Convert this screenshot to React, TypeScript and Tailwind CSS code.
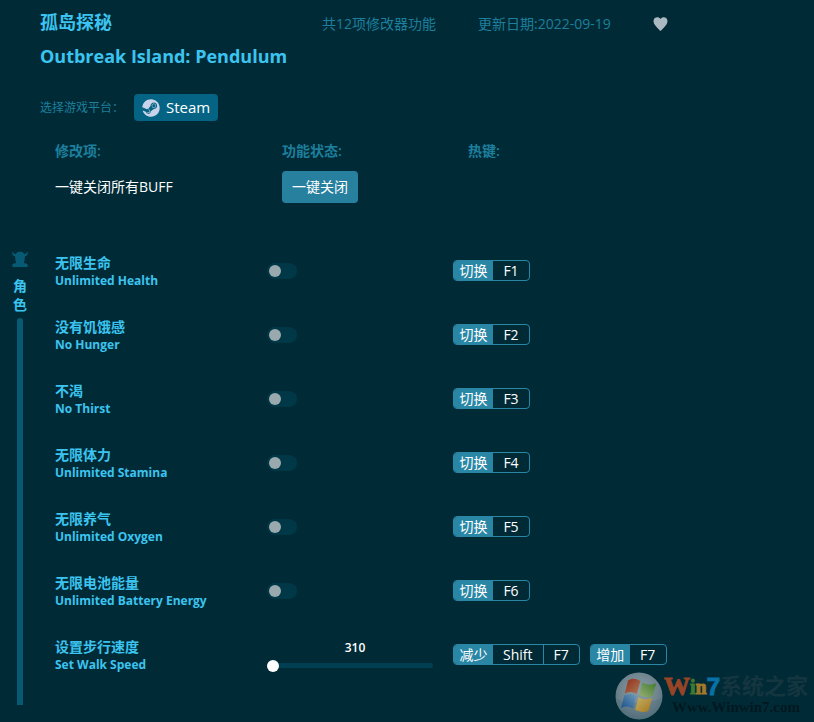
import { useState } from "react";
import { FaSteam } from "react-icons/fa";

type Hotkey = { action: string; keys: string[] };
type Cheat = { zh: string; en: string; hotkeys: Hotkey[]; slider?: boolean };

const cheats: Cheat[] = [
  { zh: "无限生命", en: "Unlimited Health", hotkeys: [{ action: "切换", keys: ["F1"] }] },
  { zh: "没有饥饿感", en: "No Hunger", hotkeys: [{ action: "切换", keys: ["F2"] }] },
  { zh: "不渴", en: "No Thirst", hotkeys: [{ action: "切换", keys: ["F3"] }] },
  { zh: "无限体力", en: "Unlimited Stamina", hotkeys: [{ action: "切换", keys: ["F4"] }] },
  { zh: "无限养气", en: "Unlimited Oxygen", hotkeys: [{ action: "切换", keys: ["F5"] }] },
  { zh: "无限电池能量", en: "Unlimited Battery Energy", hotkeys: [{ action: "切换", keys: ["F6"] }] },
  {
    zh: "设置步行速度",
    en: "Set Walk Speed",
    slider: true,
    hotkeys: [
      { action: "减少", keys: ["Shift", "F7"] },
      { action: "增加", keys: ["F7"] },
    ],
  },
];

function HotkeyGroup({ action, keys }: Hotkey) {
  return (
    <div className="flex h-[21px] overflow-hidden rounded-sm border border-[#2a86a5] text-sm leading-[19px] text-white">
      <span className="w-[39px] bg-[#2a86a5] text-center">{action}</span>
      {keys.map((key, i) => (
        <kbd
          key={key}
          className={`min-w-9 px-[10px] text-center font-[inherit] ${i > 0 ? "border-l border-[#2a86a5]" : ""}`}
        >
          {key}
        </kbd>
      ))}
    </div>
  );
}

function Toggle({ id }: { id: string }) {
  return (
    <input
      id={id}
      type="checkbox"
      role="switch"
      className="block h-4 w-[30px] cursor-pointer appearance-none rounded-full bg-[#003847] p-[2px] before:block before:size-3 before:rounded-full before:bg-[#9aa9ae] before:content-[''] checked:bg-[#2a86a5] checked:before:ml-[14px] checked:before:bg-white"
    />
  );
}

function SpeedSlider({ id }: { id: string }) {
  const [speed, setSpeed] = useState(310);
  return (
    <div className="flex w-[166px] flex-col pt-[3px]">
      <output htmlFor={id} className="pl-[10px] text-center text-xs leading-4 font-semibold text-white">
        {speed}
      </output>
      <input
        id={id}
        type="range"
        min={310}
        max={3000}
        value={speed}
        onChange={(e) => setSpeed(Number(e.target.value))}
        className="mt-px h-4 w-full cursor-pointer appearance-none bg-transparent [&::-webkit-slider-runnable-track]:h-[5px] [&::-webkit-slider-runnable-track]:rounded-full [&::-webkit-slider-runnable-track]:bg-[#003f51] [&::-webkit-slider-thumb]:-mt-[3px] [&::-webkit-slider-thumb]:size-3 [&::-webkit-slider-thumb]:appearance-none [&::-webkit-slider-thumb]:rounded-full [&::-webkit-slider-thumb]:bg-white"
      />
    </div>
  );
}

function CheatRow({ cheat, id }: { cheat: Cheat; id: string }) {
  return (
    <li className="grid h-16 grid-cols-[212px_186px_1fr] items-center">
      <label htmlFor={id} className="flex flex-col pt-0.5 font-bold text-[#3cc4f0]">
        <span className="text-sm leading-[18px]">{cheat.zh}</span>
        <span className="text-xs leading-[18px]">{cheat.en}</span>
      </label>
      {cheat.slider ? <SpeedSlider id={id} /> : <Toggle id={id} />}
      <div className="flex gap-[10px] pb-px">
        {cheat.hotkeys.map((h) => (
          <HotkeyGroup key={h.action} {...h} />
        ))}
      </div>
    </li>
  );
}

function CharacterIcon() {
  return (
    <svg viewBox="0 0 16 16" className="size-4" fill="#075a73" aria-hidden="true">
      <path d="M.3 1 1.300 1C1.300 2.300 2 3 3.800 2.900 4.600 1.300 6 .7 8 .7s3.400.6 4.200 2.200C14 3 14.700 2.300 14.700 1h1c.3 2.400-.6 3.900-2.700 4.200l-.5 4.300L11.800 12l3 .8c.5.200.8.500.8 1V16H.4v-2.200c0-.5.300-.8.8-1l3-.8-.7-2.500L3 5.200C.9 4.900 0 3.400.3 1z" />
    </svg>
  );
}

function Watermark() {
  return (
    <div className="pointer-events-none absolute right-1.5 bottom-0.5 flex items-center gap-px">
      <svg viewBox="0 0 48 48" className="size-12" aria-hidden="true">
        <defs>
          <radialGradient id="orb" cx="50%" cy="40%" r="60%">
            <stop offset="0" stopColor="#879fa9" />
            <stop offset=".65" stopColor="#71858f" />
            <stop offset="1" stopColor="#54717d" />
          </radialGradient>
          <linearGradient id="red" x1="0" y1="0" x2="1" y2="1">
            <stop offset="0" stopColor="#8e301c" />
            <stop offset="1" stopColor="#b07552" />
          </linearGradient>
          <linearGradient id="green" x1="1" y1="0" x2="0" y2="1">
            <stop offset="0" stopColor="#3c7a2c" />
            <stop offset="1" stopColor="#9aae77" />
          </linearGradient>
          <linearGradient id="blue" x1="0" y1="1" x2="1" y2="0">
            <stop offset="0" stopColor="#174f90" />
            <stop offset="1" stopColor="#6f9cb5" />
          </linearGradient>
          <linearGradient id="yellow" x1="1" y1="1" x2="0" y2="0">
            <stop offset="0" stopColor="#a8781c" />
            <stop offset="1" stopColor="#c1b069" />
          </linearGradient>
        </defs>
        <circle cx="24" cy="24" r="23.500" fill="url(#orb)" />
        <path d="M1 27c12 5 33 5 46-1-1 12-11 21-23 21S2 39 1 27z" fill="#4b6a77" opacity=".3" />
        <path d="M13 8.500c4-2.500 8-2 12.300.5l-3.500 13c-4-2.500-8-2.700-12-.6z" fill="url(#red)" />
        <path d="M27.500 10.500c4.500 2.500 9 3 13.800.8L37.600 24c-4.500 2-9 1.300-13.500-1z" fill="url(#green)" />
        <path d="M9.300 23.500c4-2.200 8-2 12 .6L18 36.500c-4-2.500-8-2.700-12-.6z" fill="url(#blue)" />
        <path d="M23.500 25c4 2.500 8.500 3 13.500.8L33.500 38.800c-4.500 2-9 1.300-13.300-1z" fill="url(#yellow)" />
      </svg>
      <div className="flex flex-col items-center font-['Liberation_Serif','Noto_Sans_CJK_SC',serif] font-bold">
        <div className="flex h-[22px] items-center leading-[22px]">
          <span className="text-[26px] text-[#9a4426] [-webkit-text-stroke:1px_#9a4426]">W</span>
          <span className="text-xl text-[#3c7a32] [-webkit-text-stroke:1px_#3c7a32]">i</span>
          <span className="text-xl text-[#a0792a] [-webkit-text-stroke:1px_#a0792a]">n</span>
          <span className="font-['Liberation_Sans',sans-serif] text-2xl text-[#0871a8] [-webkit-text-stroke:1px_#0871a8]">
            7
          </span>
          <span className="text-[22px] text-[#153540]">系统之家</span>
        </div>
        <span className="text-[15px] leading-[18px] text-[#021820]">Www.Winwin7.com</span>
      </div>
    </div>
  );
}

export default function App() {
  const [liked, setLiked] = useState(false);
  return (
    <div className="relative min-h-screen bg-[#002b36] pb-[17px] font-['Open_Sans','Noto_Sans_CJK_SC',sans-serif]">
      <header className="px-10 pt-2">
        <div className="flex h-7 items-center">
          <h1 className="w-[282px] text-lg leading-7 font-bold text-[#3cc4f0]">孤岛探秘</h1>
          <div className="flex items-center gap-[42px] pt-1 text-sm leading-7 text-[#1d7f9d]">
            <span>共12项修改器功能</span>
            <span>更新日期:2022-09-19</span>
            <button type="button" aria-label="收藏" aria-pressed={liked} onClick={() => setLiked(!liked)}>
              <svg viewBox="0 0 14 14" className="h-3.5 w-[15px]" fill={liked ? "#e5484d" : "#abb9c0"} aria-hidden="true">
                <path d="M7 2.100C8.200-.2 11.200-.3 12.700 1.100c1.700 1.700 1.600 4.500.2 6.500C11.500 9.700 9.300 12 7.700 13.400c-.4.4-1 .4-1.400 0C4.700 12 2.500 9.700 1.100 7.600-.3 5.600-.4 2.800 1.300 1.100 2.800-.3 5.800-.2 7 2.100z" />
              </svg>
            </button>
          </div>
        </div>
        <h2 className="mt-1.5 text-lg leading-7 font-bold text-[#3cc4f0]">Outbreak Island: Pendulum</h2>
        <div className="mt-6 flex items-center">
          <span className="w-[94px] text-xs text-[#1d7f9d]">选择游戏平台：</span>
          <button
            type="button"
            className="flex h-[27px] items-center gap-1.5 rounded-sm bg-[#056483] px-2 text-[15px] font-medium text-white"
          >
            <FaSteam className="size-[18px] text-[#c9d3ea]" aria-hidden="true" />
            Steam
          </button>
        </div>
      </header>

      <section className="pt-5 pl-[55px]">
        <div className="grid grid-cols-[212px_186px_1fr] text-sm leading-5 font-semibold text-[#1d7f9d]">
          <span>修改项:</span>
          <span className="pl-[15px]">功能状态:</span>
          <span className="pl-[15px]">热键:</span>
        </div>
        <div className="mt-[10px] grid grid-cols-[212px_186px_1fr] items-center text-sm text-white">
          <span>一键关闭所有BUFF</span>
          <div className="pl-[15px]">
            <button type="button" className="h-8 rounded-sm bg-[#27809e] px-[10px]">
              一键关闭
            </button>
          </div>
        </div>
      </section>

      <section className="mt-9 flex">
        <div className="flex w-10 flex-col items-center pt-3">
          <CharacterIcon />
          <h3 className="mt-[9px] w-[14px] text-sm leading-[19px] font-bold text-[#3cc4f0]">角色</h3>
          <div className="mt-1 w-1.5 flex-1 rounded-t-full bg-[#075a73]" />
        </div>
        <ul className="flex-1 pb-[18px] pl-[15px]">
          {cheats.map((cheat, i) => (
            <CheatRow key={cheat.en} cheat={cheat} id={`cheat-${i}`} />
          ))}
        </ul>
      </section>
      <Watermark />
    </div>
  );
}
